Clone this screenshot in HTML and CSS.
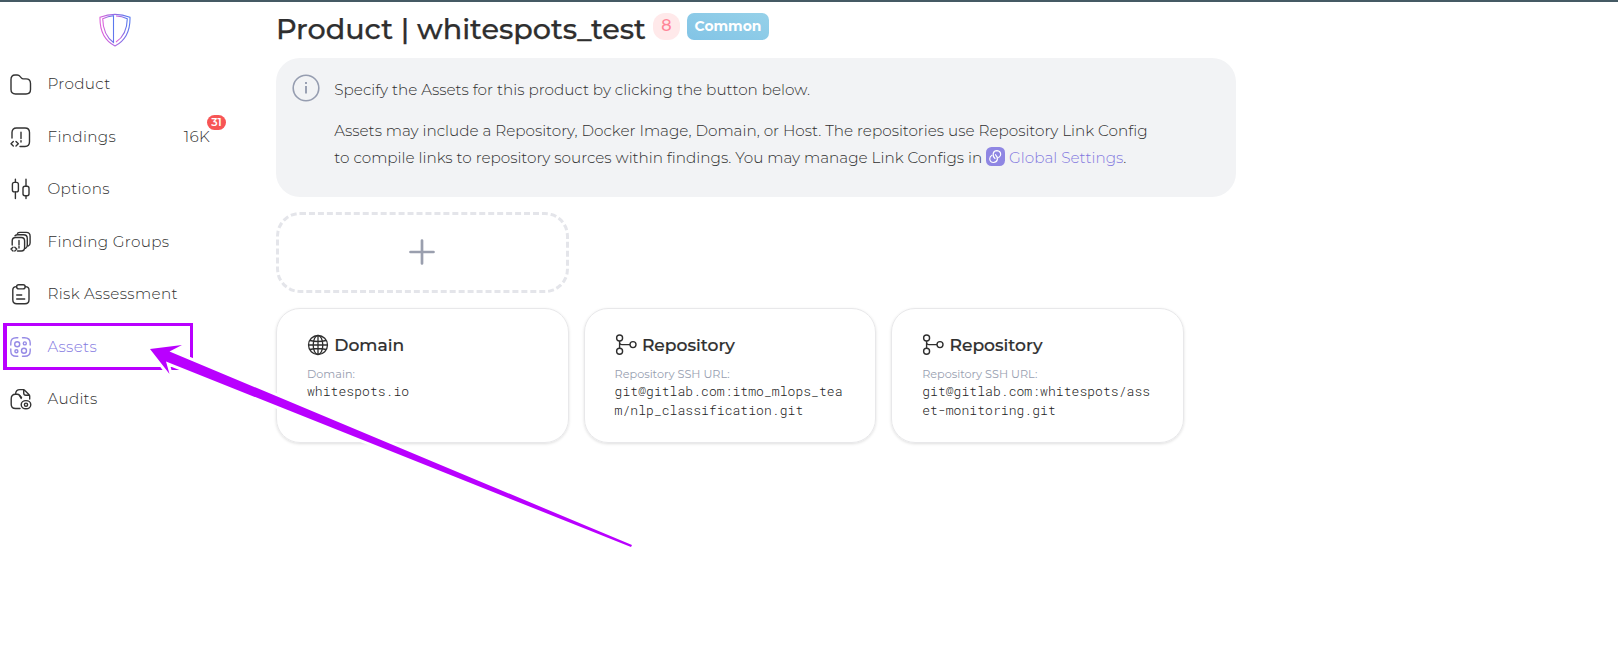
FILE: index.html
```html
<!DOCTYPE html>
<html lang="en">
<head>
<meta charset="utf-8">
<title>Product | whitespots_test</title>
<link rel="stylesheet" href="styles.css">
</head>
<body>
<svg class="defs" width="0" height="0">
  <defs>
    <linearGradient id="brand" x1="0" x2="1" y1="0.6" y2="0.4"><stop offset="0" stop-color="#e65fd8"/><stop offset="1" stop-color="#5a78ee"/></linearGradient>
    <symbol id="branch" viewBox="0 0 22 22"><g fill="none" stroke="#2f2f2f" stroke-width="1.4"><circle cx="4.6" cy="4" r="3"/><circle cx="4.6" cy="17.2" r="3"/><circle cx="18" cy="10.6" r="3"/><path d="M4.6 7v7.2M4.6 8.5q.3 2.1 2.4 2.1h8"/></g></symbol>
  </defs>
</svg>
<div class="app">
  <aside class="sidebar">
    <svg class="logo" viewBox="0 0 32 34" fill="none" stroke="url(#brand)" stroke-width="1.1">
      <path d="M1 4.2Q16-1.5 31 4.2Q31.500 25 16 33Q.5 25 1 4.200z"/>
      <path d="M14.500 2.700Q9 3 3.700 5.800Q4 22 14.500 29.500z"/>
      <path d="M17 3Q23 3 28.300 5.800Q28 22 17 29"/>
    </svg>
    <nav class="menu">
      <a class="item"><svg class="icon" viewBox="0 0 24 24"><path d="M2 7.500Q2 3 6 3h2.200q1.800 0 2.800 1.400l1.300 1.500q.8 1 2 1H17q4.500 0 4.500 4.600v6Q21.500 22 17 22H6.500Q2 22 2 17.500z"/></svg><span class="label">Product</span></a>
      <a class="item"><svg class="icon" viewBox="0 0 24 24"><path d="M3 13V7.500Q3 3 7.500 3H16q4.500 0 4.500 4.500v9.300Q20.500 21.500 16 21.500h-5"/><path d="M12 7.200v6.300M12 15.600v1.500M4.300 16.500 2 18.800l2.300 2.200M7 16.500l2.300 2.300L7 21"/></svg><span class="label">Findings</span><span class="count">16K<b class="badge">31</b></span></a>
      <a class="item"><svg class="icon" viewBox="0 0 24 24"><rect x="3.400" y="5.400" width="6" height="9.500" rx="2"/><rect x="14" y="9.200" width="6" height="9.500" rx="2"/><path d="M6.400 2.300v3M6.400 15v6.600M17 2.300v6.900M17 18.700v2.900"/></svg><span class="label">Options</span></a>
      <a class="item"><svg class="icon" viewBox="0 0 24 24"><path d="M3.200 15v-4q0-3.500 3.500-3.500h5.600q3.300 0 3.300 3.500v6.500q0 3.500-3.300 3.500H8.500"/><path d="M6 5.800Q7 4.800 8.500 4.800h6q3.800 0 3.800 3.700v6.800q0 2-1.800 3M8.500 3.300Q9.500 2.400 11 2.400h6.300q3.800 0 3.800 3.800V13q0 2-1.800 3"/><path d="M10 10.500v4.500M10 16.500v1.500M4 17.200l-2 1.900L4 21M5.800 17.200l2 1.900-2 1.900"/></svg><span class="label">Finding Groups</span></a>
      <a class="item"><svg class="icon" viewBox="0 0 24 24"><path d="M7.500 4.600Q3.800 4.600 3.800 8v9.800q0 4 4 4H16q4 0 4-4V8q0-3.400-3.700-3.400"/><rect x="7.600" y="2.700" width="8.600" height="4.200" rx="2.100"/><path d="M7.700 13h5M7.700 17h8"/></svg><span class="label">Risk Assessment</span></a>
      <a class="item active"><svg class="icon" viewBox="0 0 24 24"><path d="M1.800 10V8q0-5.300 5.500-5.300h1.500M13.500 2.700h2q5.700 0 5.700 5.300v2M21.200 14v2q0 5.300-5.700 5.300h-2M8.800 21.300H7.300Q1.800 21.300 1.800 16v-2"/><circle cx="8.200" cy="9.300" r="2.500"/><circle cx="15.800" cy="8.400" r="1.500"/><circle cx="7.400" cy="16.300" r="1.500"/><circle cx="15" cy="15.700" r="2.500"/></svg><span class="label">Assets</span></a>
      <a class="item"><svg class="icon" viewBox="0 0 24 24"><path d="M11 21.500H6.500q-4.300 0-4.300-4.300V12q0-4.800 4.300-4.800h1.700q1.500 0 2.300 1.100l1.700 3.200"/><path d="M6.600 7.200Q6.600 2.600 11 2.600h3.200q1 0 1.700.8l4 4.100q.8.800.8 1.800V12M14.700 2.800v3.300q0 2.200 2.200 2.200h3.300M10.500 8.300l2 2.200"/><ellipse cx="17" cy="17.700" rx="4.800" ry="4.100"/><circle cx="17" cy="17.700" r="1.600"/></svg><span class="label">Audits</span></a>
    </nav>
  </aside>
  <main class="content">
    <header class="heading">
      <h1 class="title">Product | whitespots_test</h1>
      <span class="score">8</span>
      <span class="tag">Common</span>
    </header>
    <section class="notice">
      <svg class="info" viewBox="0 0 28 28"><circle cx="14" cy="14" r="12.800" fill="none" stroke="#969db0" stroke-width="1.600"/><path d="M14 12v7.500M14 8v1.900" stroke="#969db0" stroke-width="1.900"/></svg>
      <div class="copy">
        <p>Specify the Assets for this product by clicking the button below.</p>
        <p>Assets may include a Repository, Docker Image, Domain, or Host. The repositories use Repository Link Config<br>to compile links to repository sources within findings. You may manage Link Configs in <svg class="chain" viewBox="0 0 19 19"><rect width="19" height="19" rx="5.500" fill="#8f86e3"/><g fill="none" stroke="#fff" stroke-width="1.150" stroke-linecap="round"><path d="M9 11.500Q6.700 9.500 7.200 6.500Q8 3.600 11 3.600Q14.500 4 14.700 7.300Q14.600 9.500 12.700 10.600"/><path d="M6 8.200Q3.800 9.300 3.700 12Q4.200 15.300 7.500 15.500Q10.600 15.300 11.400 12.500Q11.600 9.500 9.500 7.700"/></g></svg> <a class="link">Global Settings</a>.</p>
      </div>
    </section>
    <section class="grid">
      <button class="add"><svg viewBox="0 0 26 26"><path d="M13 1.500v23M1.500 13h23" stroke="#9a9fae" stroke-width="2.700" stroke-linecap="round"/></svg></button>
      <article class="card first">
        <h2><svg class="glyph" viewBox="0 0 22 22" fill="none" stroke="#2f2f2f" stroke-width="1.300"><circle cx="11" cy="11" r="9.500"/><ellipse cx="11" cy="11" rx="4.800" ry="9.500"/><path d="M11 1.500v19M1.500 11h19M3 6.500q8 2 16 0M3 15.500q8-2 16 0"/></svg><span>Domain</span></h2>
        <div class="key">Domain:</div><div class="value">whitespots.io</div>
      </article>
      <article class="card">
        <h2><svg class="glyph"><use href="#branch"/></svg><span>Repository</span></h2>
        <div class="key">Repository SSH URL:</div><div class="value">git@gitlab.com:itmo_mlops_tea<br>m/nlp_classification.git</div>
      </article>
      <article class="card">
        <h2><svg class="glyph"><use href="#branch"/></svg><span>Repository</span></h2>
        <div class="key">Repository SSH URL:</div><div class="value">git@gitlab.com:whitespots/ass<br>et-monitoring.git</div>
      </article>
    </section>
  </main>
</div>
<div class="marker"></div>
<svg class="arrow" viewBox="0 0 1618 661"><path d="M150 349 182 345 169.500 351.500 631.500 545 631 546.500 166 361.500 169.500 374z" fill="#fff" stroke="#fff" stroke-width="6"/><path d="M150 349 182 345 169.500 351.500 632 545 631 547 166 361.500 169.500 374z" fill="#b900ff"/></svg>
</body>
</html>
```
FILE: styles.css
```css
* { box-sizing: border-box; }
body { margin: 0; height: 661px; overflow: hidden; background: #fff; border-top: 2px solid #455a64; font-family: Montserrat, Inter, sans-serif; font-weight: 300; font-size: 15.23px; color: #2f2f2f; }
.defs { position: absolute; }
.app { display: flex; }
.sidebar { width: 276px; flex: none; }
.logo { display: block; width: 32px; height: 34px; margin: 11px 0 0 99px; }
.menu { padding-top: 11px; }
.item { display: flex; align-items: center; height: 52.5px; padding-left: 9.4px; }
.icon { width: 24px; height: 24px; margin-right: 14.1px; fill: none; stroke: #333; stroke-width: 1.4; stroke-linecap: round; stroke-linejoin: round; }
.label { white-space: nowrap; padding-bottom: 1px; letter-spacing: .33px; }
.active { color: #8379df; }
.active .icon { stroke: #968be6; }
.count { position: relative; margin-left: auto; margin-right: 66px; letter-spacing: .3px; }
.badge { position: absolute; right: -16px; top: -12px; width: 19px; height: 15px; border-radius: 8px; background: #f75555; color: #fff; font-size: 11px; line-height: 15px; font-weight: 600; text-align: center; letter-spacing: 0; }
.content { flex: none; width: 960px; }
.heading { display: flex; align-items: flex-start; height: 56px; padding-top: 11px; }
.title { margin: 0; width: 377px; font-size: 28.64px; line-height: 32px; font-weight: 500; -webkit-text-stroke: .25px #2f2f2f; color: #2f2f2f; white-space: nowrap; }
.score { width: 27px; height: 27px; border-radius: 12px; background: #ffe9ea; color: #ff8597; font-size: 16px; font-weight: 500; line-height: 26px; text-align: center; margin-right: 7px; }
.tag { width: 82px; height: 27px; border-radius: 7px; background: linear-gradient(20deg, #82c4e6, #96d1e9); color: #fff; font-size: 13.9px; font-weight: 700; line-height: 27px; text-align: center; }
.notice { display: flex; height: 139px; border-radius: 24px; background: #f2f3f5; padding: 16px 0 0 16px; }
.info { width: 28px; height: 28px; margin-right: 14.3px; flex: none; }
.copy { padding-top: 2px; }
.copy p { margin: 0 0 14px; line-height: 27px; white-space: nowrap; }
.chain { width: 19px; height: 19px; vertical-align: -3px; }
.link { color: #8379df; }
.grid { display: grid; grid-template-columns: repeat(3, 292.9px); gap: 15px 14.7px; padding-top: 15px; }
.add { display: flex; align-items: center; justify-content: center; height: 81px; padding: 0 0 1px; background: none; border: 3px dashed #e4e5ea; border-radius: 24px; }
.add svg { width: 26px; height: 26px; }
.card { height: 135px; border: 1px solid #e8e8ea; border-radius: 24px; padding: 24px 30px; box-shadow: 0 1px 3px rgba(0, 0, 0, .13); }
.card.first { grid-column: 1; }
.card h2 { display: flex; align-items: center; height: 24px; margin: 0; gap: 5.3px; font-size: 17.15px; font-weight: 500; -webkit-text-stroke: .2px #2f2f2f; color: #2f2f2f; }
.card h2 span { line-height: 20px; padding-bottom: 1px; }
.glyph { width: 22px; height: 22px; }
.key { margin-top: 9px; font-size: 11.25px; line-height: 17px; font-weight: 400; color: #979eb0; }
.value { margin-top: -1px; font: 300 13px/19px "Roboto Mono", "Liberation Mono", monospace; letter-spacing: .06px; white-space: nowrap; color: #222; }
.marker { position: absolute; left: 3px; top: 323px; width: 190px; height: 47px; border: 3px solid #b900ff; border-left-width: 4px; }
.arrow { position: absolute; left: 0; top: 0; width: 1618px; height: 661px; }
```
